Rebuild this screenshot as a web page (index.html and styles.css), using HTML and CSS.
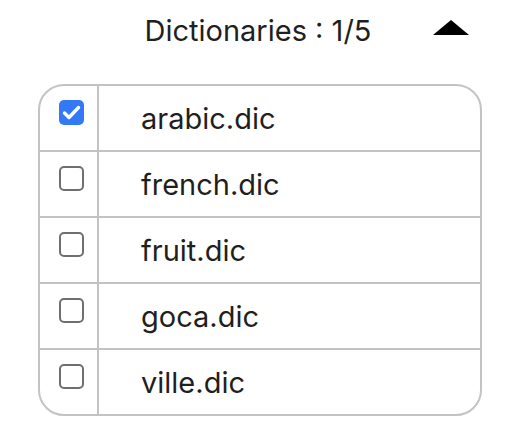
FILE: index.html
```html
<!DOCTYPE html>
<html>
<head>
<meta charset="utf-8">
<link rel="stylesheet" href="styles.css">
</head>
<body>
<div class="page">
  <div class="header">
    <span class="title">Dictionaries : 1/5</span>
    <svg class="toggle" width="36" height="15" viewBox="0 0 36 15"><polygon points="18,0 36,15 0,15" fill="#000"/></svg>
  </div>
  <div class="table">
    <div class="row">
      <div class="cell-check"><span class="box checked"><svg width="25" height="25" viewBox="0 0 25 25"><polyline points="5.5,13 10,17.5 19.5,7.5" fill="none" stroke="#fff" stroke-width="3.4" stroke-linecap="round" stroke-linejoin="round"/></svg></span></div>
      <div class="cell-name">arabic.dic</div>
    </div>
    <div class="row">
      <div class="cell-check"><span class="box"></span></div>
      <div class="cell-name">french.dic</div>
    </div>
    <div class="row">
      <div class="cell-check"><span class="box"></span></div>
      <div class="cell-name">fruit.dic</div>
    </div>
    <div class="row">
      <div class="cell-check"><span class="box"></span></div>
      <div class="cell-name">goca.dic</div>
    </div>
    <div class="row">
      <div class="cell-check"><span class="box"></span></div>
      <div class="cell-name">ville.dic</div>
    </div>
  </div>
</div>
</body>
</html>
```
FILE: styles.css
```css
html, body {
  margin: 0;
  padding: 0;
  background: #fff;
}
body {
  font-family: "Inter", "Liberation Sans", sans-serif;
  color: #1f1f21;
  width: 516px;
  height: 444px;
}
.page {
  display: flex;
  flex-direction: column;
}
.header {
  height: 84px;
  display: grid;
  grid-template-columns: 1fr auto 1fr;
  align-items: start;
}
.title {
  grid-column: 2;
  font-size: 29px;
  line-height: 34px;
  padding-top: 14px;
  white-space: nowrap;
}
.toggle {
  grid-column: 3;
  justify-self: end;
  margin-top: 20px;
  margin-right: 47px;
  display: block;
}
.table {
  margin-left: 38px;
  width: 440px;
  border: 2px solid #c3c3c3;
  border-radius: 26px;
  overflow: hidden;
}
.row {
  display: flex;
  height: 64px;
  border-top: 2px solid #c3c3c3;
}
.row:first-child {
  border-top: none;
}
.cell-check {
  width: 59px;
  flex: none;
  border-right: 2px solid #c3c3c3;
  padding: 14px 0 0 19px;
  box-sizing: border-box;
}
.box {
  display: block;
  width: 25px;
  height: 25px;
  box-sizing: border-box;
  border: 2px solid #6f6f6f;
  border-radius: 5px;
}
.box.checked {
  border: none;
  background: #3379f6;
}
.box svg {
  display: block;
}
.cell-name {
  padding-left: 42px;
  font-size: 29px;
  line-height: 66px;
}
```
